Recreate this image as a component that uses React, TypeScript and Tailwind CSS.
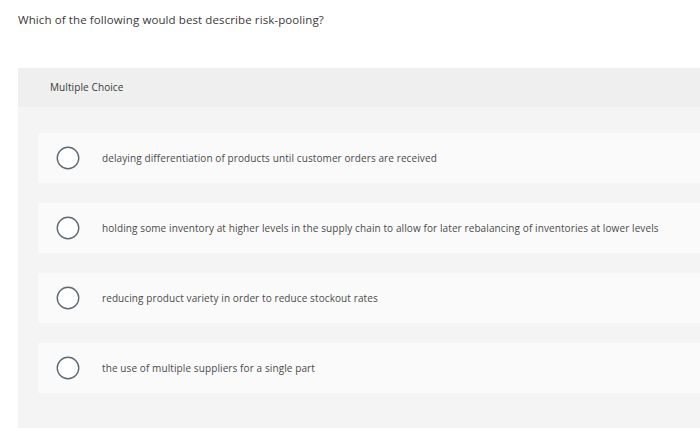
const options = [
  'delaying differentiation of products until customer orders are received',
  'holding some inventory at higher levels in the supply chain to allow for later rebalancing of inventories at lower levels',
  'reducing product variety in order to reduce stockout rates',
  'the use of multiple suppliers for a single part',
];

function Radio() {
  return (
    <svg width="24" height="24" viewBox="0 0 24 24" className="shrink-0">
      <circle cx="12" cy="12" r="10.75" fill="#ffffff" stroke="#5f6b73" strokeWidth="1.4" />
    </svg>
  );
}

export default function App() {
  return (
    <div className="w-[700px] h-[431px] overflow-hidden bg-white font-['Open_Sans',sans-serif]">
      <div className="pl-[18px] pt-[11px] h-[68px] text-[11.5px] tracking-[0.1px] text-[#3a3a3a]">
        Which of the following would best describe risk-pooling?
      </div>
      <div className="ml-[18px] w-[720px] h-[360px] bg-[#f4f4f4]">
        <div className="h-[39px] bg-[#efefef] flex items-center pl-[32px] text-[10px] tracking-[0.1px] text-[#3a3a3a]">
          Multiple Choice
        </div>
        <div className="flex flex-col gap-[20px] pt-[26px] pl-[20px]">
          {options.map((o) => (
            <div key={o} className="h-[50px] bg-[#fafafa] flex items-center pl-[18px]">
              <Radio />
              <span className="ml-[22px] text-[10px] tracking-[0.1px] text-[#4a4a4a]">{o}</span>
            </div>
          ))}
        </div>
      </div>
    </div>
  );
}
